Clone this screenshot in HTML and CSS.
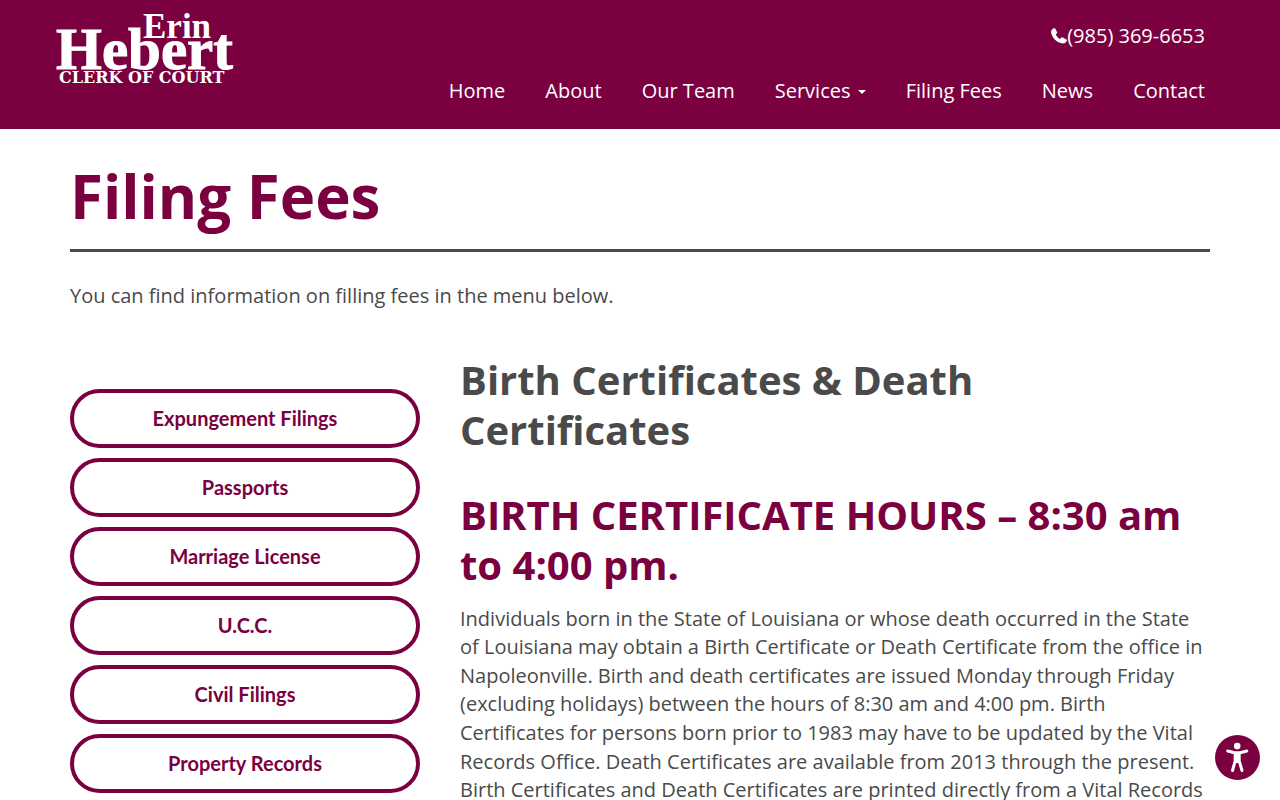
FILE: index.html
```html
<!DOCTYPE html>
<html lang="en">
<head>
    <meta charset="UTF-8">
    <meta name="viewport" content="width=device-width, initial-scale=1.0">
    <title>Filing Fees</title>
    <link rel="stylesheet" href="styles.css">
</head>
<body>
    <header class="site-header">
        <div class="header-inner">
            <a class="logo" href="#" aria-label="Erin Hebert Clerk of Court">
                <svg width="184" height="80" viewBox="0 0 184 80">
                    <text class="logo-first" x="88" y="28">Erin</text>
                    <text class="logo-last" x="1" y="59">Hebert</text>
                    <text class="logo-office" x="4" y="73">CLERK OF COURT</text>
                </svg>
            </a>
            <div class="header-right">
                <a class="phone" href="tel:9853696653">
                    <svg width="16" height="16" viewBox="0 0 16 16" aria-hidden="true">
                        <path d="M2.200.5C3 0 4 0 4.400.8L6 3.900c.3.700.2 1.100-.3 1.600l-1 .9c.9 1.900 2.400 3.500 4.500 4.500l1-1.100c.5-.5 1-.6 1.600-.3l3.300 1.700c.8.4 1 1 .6 1.700-1 2-2.700 2.900-4.900 2.400C5.300 14.200 1.100 9.700.1 4.500-.2 2.900.8 1.300 2.200.5z"/>
                    </svg>(985) 369-6653</a>
                <nav class="main-nav">
                    <a href="#">Home</a>
                    <a href="#">About</a>
                    <a href="#">Our Team</a>
                    <a href="#">Services <span class="caret"></span></a>
                    <a href="#">Filing Fees</a>
                    <a href="#">News</a>
                    <a href="#">Contact</a>
                </nav>
            </div>
        </div>
    </header>

    <main class="container">
        <h1>Filing Fees</h1>
        <p class="intro">You can find information on filling fees in the menu below.</p>

        <div class="columns">
            <nav class="fee-menu" aria-label="Filing fees">
                <a href="#">Expungement Filings</a>
                <a href="#">Passports</a>
                <a href="#">Marriage License</a>
                <a href="#">U.C.C.</a>
                <a href="#">Civil Filings</a>
                <a href="#">Property Records</a>
            </nav>

            <article class="fee-content">
                <h2>Birth Certificates &amp; Death Certificates</h2>
                <h2 class="hours">BIRTH CERTIFICATE HOURS – 8:30 am to 4:00 pm.</h2>
                <p>Individuals born in the State of Louisiana or whose death occurred in the State of Louisiana may obtain a Birth Certificate or Death Certificate from the office in Napoleonville. Birth and death certificates are issued Monday through Friday (excluding holidays) between the hours of 8:30 am and 4:00 pm. Birth Certificates for persons born prior to 1983 may have to be updated by the Vital Records Office. Death Certificates are available from 2013 through the present. Birth Certificates and Death Certificates are printed directly from a Vital Records</p>
            </article>
        </div>
    </main>

    <button class="accessibility" type="button" aria-label="Accessibility options">
        <svg width="45" height="45" viewBox="0 0 45 45" aria-hidden="true">
            <circle cx="22.200" cy="11.100" r="3.300"/>
            <path d="M12.700 16 19.300 17.800H25.200L31.800 16M20.200 18.200V26L17.500 35.500M24.200 18.200V26L27 35.500M22.200 18.500V26.500"/>
        </svg>
    </button>
</body>
</html>
```
FILE: styles.css
```css
:root {
    --maroon: #7b003f;
    --text: #4a4a4a;
}

* {
    box-sizing: border-box;
}

body {
    margin: 0;
    font-family: "Open Sans", Arial, sans-serif;
    font-size: 20px;
    line-height: 1.43;
    color: var(--text);
    background: #fff;
}

a {
    text-decoration: none;
}

.site-header {
    background: var(--maroon);
}

.header-inner {
    display: flex;
    justify-content: space-between;
    align-items: flex-start;
    max-width: 1170px;
    min-height: 129px;
    margin: 0 auto;
    padding-top: 10px;
}

.logo svg {
    display: block;
    overflow: visible;
    fill: #fff;
    font-family: "Liberation Serif", "Times New Roman", serif;
    font-weight: bold;
}

.logo-first {
    font-size: 35px;
}

.logo-last {
    font-size: 59px;
    stroke: #fff;
    stroke-width: 1px;
}

.logo-office {
    font-family: "DejaVu Serif", serif;
    font-size: 16px;
}

.header-right {
    display: flex;
    flex-direction: column;
    align-items: flex-end;
    gap: 26px;
    padding: 12px 20px 0 0;
}

.header-right a {
    color: #fff;
}

.phone {
    display: flex;
    align-items: center;
}

.phone svg {
    fill: #fff;
}

.main-nav {
    display: flex;
    gap: 40px;
}

.caret {
    display: inline-block;
    margin-left: 2px;
    vertical-align: middle;
    border-top: 4px solid;
    border-right: 4px solid transparent;
    border-left: 4px solid transparent;
}

.container {
    max-width: 1170px;
    margin: 0 auto;
    padding: 0 15px;
}

h1 {
    margin: 30px 0;
    padding-bottom: 16px;
    border-bottom: 3px solid var(--text);
    font-size: 60px;
    line-height: 74px;
    color: var(--maroon);
}

p {
    margin: 0;
}

.columns {
    display: grid;
    grid-template-columns: 350px 1fr;
    gap: 40px;
    margin-top: 44px;
}

.fee-menu {
    display: flex;
    flex-direction: column;
    gap: 10px;
    padding-top: 34px;
}

.fee-menu a {
    padding: 11px 20px;
    border: 4px solid var(--maroon);
    border-radius: 30px;
    font-family: Lato, sans-serif;
    font-weight: bold;
    line-height: 29px;
    text-align: center;
    color: var(--maroon);
}

h2 {
    margin: 0 0 35px;
    font-size: 40px;
    line-height: 50px;
}

.hours {
    margin-bottom: 15px;
    color: var(--maroon);
}

.accessibility {
    position: fixed;
    right: 20px;
    bottom: 20px;
    width: 45px;
    height: 45px;
    padding: 0;
    border: 0;
    border-radius: 50%;
    background: var(--maroon);
    cursor: pointer;
}

.accessibility svg {
    display: block;
    fill: #fff;
}

.accessibility path {
    fill: none;
    stroke: #fff;
    stroke-width: 3;
    stroke-linecap: round;
    stroke-linejoin: round;
}
```
